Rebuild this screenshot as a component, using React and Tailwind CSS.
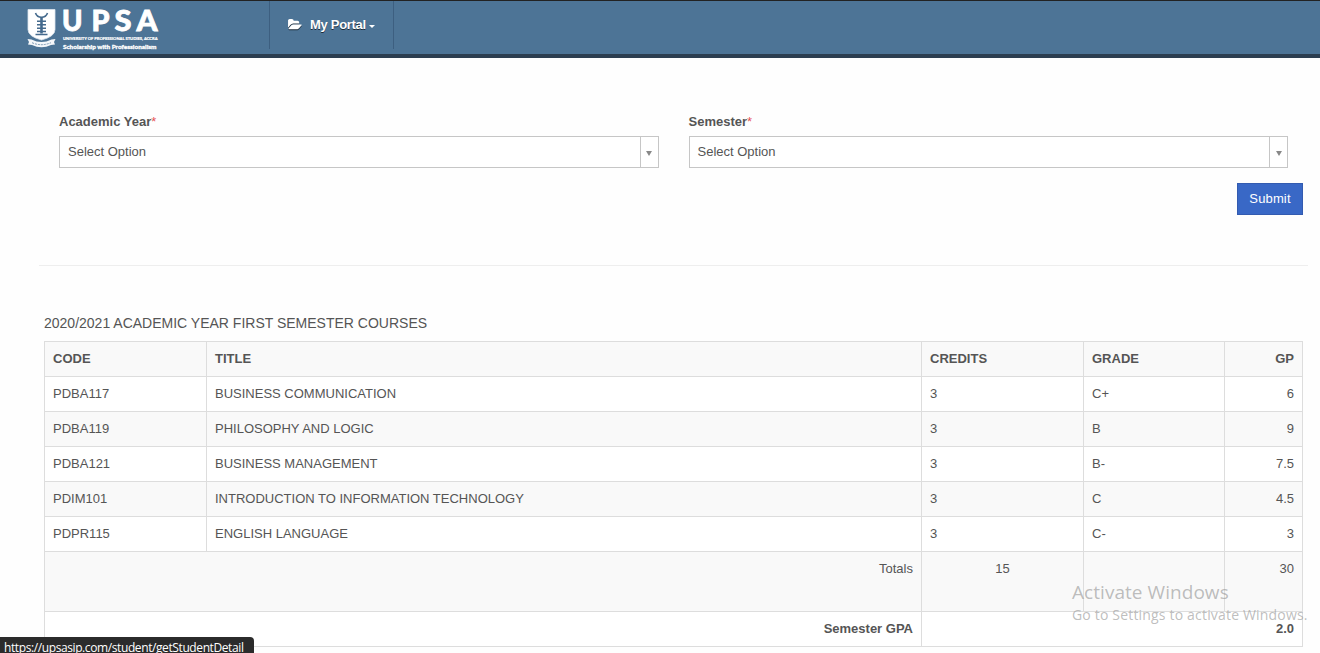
const courses = [
  ['PDBA117', 'BUSINESS COMMUNICATION', '3', 'C+', '6'],
  ['PDBA119', 'PHILOSOPHY AND LOGIC', '3', 'B', '9'],
  ['PDBA121', 'BUSINESS MANAGEMENT', '3', 'B-', '7.5'],
  ['PDIM101', 'INTRODUCTION TO INFORMATION TECHNOLOGY', '3', 'C', '4.5'],
  ['PDPR115', 'ENGLISH LANGUAGE', '3', 'C-', '3'],
];

const GRID = 'grid grid-cols-[162px_715px_162px_141px_78px]';
const CELL = 'border-r border-b border-[#dddddd] px-2 pt-2 leading-[18px]';

function Logo() {
  return (
    <svg className="block h-[46px] w-[136px] overflow-visible" viewBox="0 0 136 46" role="img" aria-label="UPSA">
      <path d="M2 3.500h27v20q0 7-13.500 10.500Q2 30.500 2 23.500z" fill="#fff" stroke="#dce5ee" strokeWidth=".8" />
      <path d="M9.500 7q1.500 4.300 6 4.300t6-4.300" fill="none" stroke="#456a8d" strokeWidth="1.600" />
      <path d="M15.500 11v16.500" stroke="#456a8d" strokeWidth="2.600" />
      <path d="M11 15.200h9M11 18.700h9M11 22.200h9M11 25.500h9M9.500 28.600h12" stroke="#456a8d" strokeWidth="1.500" />
      <path d="M1.500 33l4 .5q10 5 20 0l4-.5-1.500 3 1 2.500-4 .5q-9.500 4.500-19 0l-4-.5 1-2.500z" fill="#f5f7fa" />
      <path d="M6 36.700q9.500 4 19 0" fill="none" stroke="#7f9ab4" strokeWidth="1" strokeDasharray="2 1" />
      <g fill="#fff" stroke="#fff" fontFamily="Lato, sans-serif" fontWeight="900">
        <g fontSize="28" strokeWidth=".8">
          <text x="36" y="25.300" textLength="20.500" lengthAdjust="spacingAndGlyphs">U</text>
          <text x="65.500" y="25.300" textLength="18" lengthAdjust="spacingAndGlyphs">P</text>
          <text x="88.500" y="25.300" textLength="17" lengthAdjust="spacingAndGlyphs">S</text>
          <text x="110.500" y="25.300" textLength="21" lengthAdjust="spacingAndGlyphs">A</text>
        </g>
        <text x="37" y="34.300" fontSize="4.500" textLength="94.500" lengthAdjust="spacingAndGlyphs" strokeWidth=".2">UNIVERSITY OF PROFESSIONAL STUDIES, ACCRA</text>
        <text x="37" y="42.500" fontSize="6.300" textLength="93.500" lengthAdjust="spacingAndGlyphs" strokeWidth=".3">Scholarship with Professionalism</text>
      </g>
    </svg>
  );
}

function Header() {
  return (
    <header className="flex h-[58px] shrink-0 border-t border-b-4 border-t-[#222222] border-b-[#2c3e50] bg-[#4d7496]">
      <div className="w-[269px] pt-[5px] pl-[26px]">
        <Logo />
      </div>
      <button className="flex h-12 w-[125px] items-center border-x border-[#3d5f80] pl-[18px] text-[13px] font-bold text-white [text-shadow:0_1px_0_#1c2a38]">
        <svg className="-mt-px h-[13px] w-[14px] overflow-visible [filter:drop-shadow(0_1px_0_#1c2a38)]" viewBox="0 0 1920 1792" fill="#fff">
          <path d="M1879 952q0 31-31 66l-336 396q-43 51-120.500 86.500t-143.500 35.500h-1088q-34 0-60.500-13t-26.500-43q0-31 31-66l336-396q43-51 120.500-86.500t143.500-35.500h1088q34 0 60.500 13t26.500 43zm-343-344v160h-832q-94 0-197 47.500t-164 119.500l-337 396-5 6q0-4-.5-12.500t-.5-12.500v-960q0-92 66-158t158-66h320q92 0 158 66t66 158v32h544q92 0 158 66t66 158z" />
        </svg>
        <span className="ml-2 whitespace-nowrap tracking-[-0.300px]">My Portal</span>
        <span className="mt-[2px] ml-[3px] border-x-[3px] border-t-[3px] border-x-transparent border-t-white" />
      </button>
    </header>
  );
}

function Select({ label }) {
  return (
    <div className="flex-1">
      <div className="h-[23px] text-[13px] leading-[18px] font-bold">
        {label}
        <span className="font-normal text-[#e02222]/80">*</span>
      </div>
      <div className="flex h-8 border border-[#c6c6c6] bg-white">
        <span className="flex-1 pl-2 text-[13px] leading-[29px]">Select Option</span>
        <span className="flex w-[18px] items-center justify-center border-l border-[#c6c6c6]">
          <span className="mt-[2px] border-x-[3px] border-t-[5px] border-x-transparent border-t-[#888888]" />
        </span>
      </div>
    </div>
  );
}

export default function App() {
  return (
    <div className="relative flex h-[653px] w-[1320px] flex-col overflow-hidden bg-[#fefefe] font-['Liberation_Sans',Arial,sans-serif] text-[13px] text-[#555555]">
      <Header />
      <main className="flex flex-col">
        <form className="mr-3 ml-[39px] h-[208px] border-b border-[#eeeeee] pt-[55px] pr-5 pl-5">
          <div className="flex gap-[30px]">
            <Select label="Academic Year" />
            <Select label="Semester" />
          </div>
          <div className="-mr-[15px] flex justify-end pt-[15px]">
            <button type="button" className="h-8 w-[66px] border border-[#335bb0] bg-[#3968c6] pb-px text-[13px] tracking-[0.150px] text-white">Submit</button>
          </div>
        </form>
        <section className="ml-[44px] w-[1259px] pt-[48px]">
          <h2 className="h-[27px] text-[14px] leading-[18px]">2020/2021 ACADEMIC YEAR FIRST SEMESTER COURSES</h2>
          <div className="border-t border-l border-[#dddddd]">
            <div className={`${GRID} h-[35px] bg-[#f9f9f9] font-bold`}>
              <div className={CELL}>CODE</div>
              <div className={CELL}>TITLE</div>
              <div className={CELL}>CREDITS</div>
              <div className={CELL}>GRADE</div>
              <div className={`${CELL} text-right`}>GP</div>
            </div>
            {courses.map(([code, title, credits, grade, gp], i) => (
              <div key={code} className={`${GRID} h-[35px] ${i % 2 ? 'bg-[#f9f9f9]' : 'bg-white'}`}>
                <div className={CELL}>{code}</div>
                <div className={CELL}>{title}</div>
                <div className={CELL}>{credits}</div>
                <div className={CELL}>{grade}</div>
                <div className={`${CELL} text-right`}>{gp}</div>
              </div>
            ))}
            <div className={`${GRID} h-[60px] bg-[#f9f9f9]`}>
              <div className={`${CELL} col-span-2 text-right`}>Totals</div>
              <div className={`${CELL} text-center`}>15</div>
              <div className={CELL} />
              <div className={`${CELL} text-right`}>30</div>
            </div>
            <div className={`${GRID} h-[35px] bg-white font-bold`}>
              <div className={`${CELL} col-span-2 text-right`}>Semester GPA</div>
              <div className={`${CELL} col-span-3 text-right`}>2.0</div>
            </div>
          </div>
        </section>
      </main>
      <div className="pointer-events-none absolute top-[580px] left-[1072px] font-['Open_Sans','Noto_Sans',sans-serif] whitespace-nowrap text-[#999999]/65">
        <div className="text-[19px] leading-[25px] tracking-[0.050px]">Activate Windows</div>
        <div className="text-[14px] leading-[20px] tracking-[0.180px]">Go to Settings to activate Windows.</div>
      </div>
      <div className="absolute bottom-0 left-0 h-4 w-[254px] overflow-hidden rounded-tr-[4px] bg-[#2b2b2b] pt-[2px] pl-1 font-['Open_Sans','Noto_Sans',sans-serif] text-[12px] leading-[18px] tracking-[-0.400px] whitespace-nowrap text-white">
        https://upsasip.com/student/getStudentDetail
      </div>
    </div>
  );
}
